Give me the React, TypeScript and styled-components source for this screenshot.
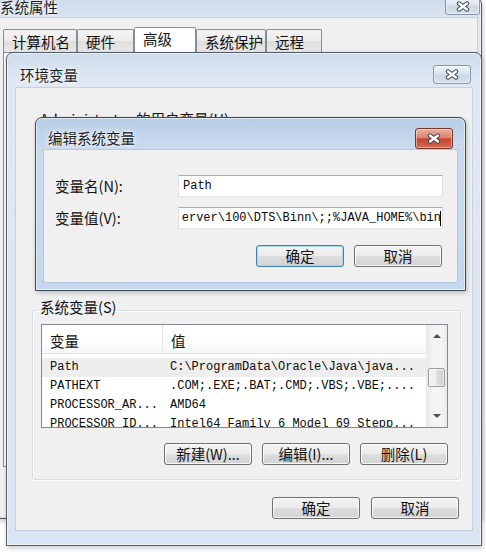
import React from "react"
import styled, { createGlobalStyle } from "styled-components"

const uiFont = `"Noto Sans CJK SC", "Noto Sans", sans-serif`
const monoFont = `"Liberation Mono", "DejaVu Sans Mono", monospace`

const GlobalStyle = createGlobalStyle`
  * { box-sizing: border-box; }
  html, body { margin: 0; padding: 0; background: #ffffff; }
  body { font-family: ${uiFont}; color: #111111; }
`

interface VarRow {
  name: string
  value: string
  selected?: boolean
}

const systemVars: VarRow[] = [
  { name: "Path", value: "C:\\ProgramData\\Oracle\\Java\\java...", selected: true },
  { name: "PATHEXT", value: ".COM;.EXE;.BAT;.CMD;.VBS;.VBE;...." },
  { name: "PROCESSOR_AR...", value: "AMD64" },
  { name: "PROCESSOR_ID...", value: "Intel64 Family 6 Model 69 Stepp..." },
]

const tabs = [
  { label: "计算机名", width: 74 },
  { label: "硬件", width: 57 },
  { label: "高级", width: 62, selected: true },
  { label: "系统保护", width: 70 },
  { label: "远程", width: 56 },
]

// the field is scrolled to its end, so only the tail is in view
const pathTail = "erver\\100\\DTS\\Binn\\;;%JAVA_HOME%\\bin"

const CloseGlyph = () => (
  <svg width="14" height="11" viewBox="0 0 14 11">
    <path
      d="M3 2.5 L11 8.5 M11 2.5 L3 8.5"
      stroke="#3d4450"
      strokeWidth="4.4"
      strokeLinecap="round"
      fill="none"
    />
    <path
      d="M3 2.5 L11 8.5 M11 2.5 L3 8.5"
      stroke="#ffffff"
      strokeWidth="2.4"
      strokeLinecap="round"
      fill="none"
    />
  </svg>
)

const VarList = ({ rows }: { rows: VarRow[] }) => (
  <ListBox>
    <ListTable>
      <ListHeader>
        <HeaderCell $divider>变量</HeaderCell>
        <HeaderCell>值</HeaderCell>
      </ListHeader>
      <ListBody>
        {rows.map((row) => (
          <ListRow key={row.name} $selected={row.selected}>
            <NameCell>{row.name}</NameCell>
            <ValueCell>{row.value}</ValueCell>
          </ListRow>
        ))}
      </ListBody>
    </ListTable>
    <ScrollBar>
      <ScrollArrow />
      <ScrollThumb />
      <ScrollTrack />
      <ScrollArrow $down />
    </ScrollBar>
  </ListBox>
)

export default function App() {
  return (
    <>
      <GlobalStyle />
      <Desktop>
        {/* 系统属性 (behind) */}
        <Window $x={-5} $y={-3} $w={487} $h={522}>
          <TitleBar $height={20} $padTop={0} $padLeft={4} $align="flex-start">
            <TitleText $top={0}>系统属性</TitleText>
            <CloseButton $w={35} $h={18} $mt={-1} $mr={1}>
              <CloseGlyph />
            </CloseButton>
          </TitleBar>
          <Client $side={4} $bottom={1}>
            <OuterBody>
              <TabStrip>
                {tabs.map((tab) => (
                  <Tab key={tab.label} $width={tab.width} $selected={tab.selected}>
                    {tab.label}
                  </Tab>
                ))}
              </TabStrip>
              <TabPanel />
            </OuterBody>
          </Client>
        </Window>

        {/* 环境变量 */}
        <Window $x={6} $y={52} $w={476} $h={494}>
          <TitleBar $height={35} $padTop={8} $padLeft={13}>
            <TitleText>环境变量</TitleText>
            <CloseButton $w={38} $h={19} $mr={10}>
              <CloseGlyph />
            </CloseButton>
          </TitleBar>
          <Client $side={9} $bottom={15}>
            <EnvBody>
              {/* user variables: covered by the edit dialog */}
              <GroupBox $ghost>
                <GroupLegend>Administrator 的用户变量(U)</GroupLegend>
                <CoveredArea />
              </GroupBox>
              <GroupBox $mt={7}>
                <GroupLegend>系统变量(S)</GroupLegend>
                <VarList rows={systemVars} />
                <ButtonRow $mt={15} $gap={10}>
                  <Button>新建(W)...</Button>
                  <Button>编辑(I)...</Button>
                  <Button>删除(L)</Button>
                </ButtonRow>
              </GroupBox>
              <ButtonRow $mt={17} $gap={11} $pr={2}>
                <Button>确定</Button>
                <Button>取消</Button>
              </ButtonRow>
            </EnvBody>
          </Client>
        </Window>

        {/* 编辑系统变量 (active) */}
        <Window $x={35} $y={117} $w={431} $h={174} $active>
          <TitleBar $height={32} $padTop={8} $padLeft={12}>
            <TitleText>编辑系统变量</TitleText>
            <CloseButton $w={38} $h={21} $mr={12} $danger>
              <CloseGlyph />
            </CloseButton>
          </TitleBar>
          <Client $side={8} $bottom={8}>
            <EditBody>
              <FieldLabel>变量名(N):</FieldLabel>
              <TextField>
                <span>Path</span>
              </TextField>
              <FieldLabel>变量值(V):</FieldLabel>
              <TextField $scrolled>
                <span>{pathTail}</span>
                <Caret />
              </TextField>
              <DialogButtons $mt={6} $gap={10} $pr={1}>
                <Button $default>确定</Button>
                <Button>取消</Button>
              </DialogButtons>
            </EditBody>
          </Client>
        </Window>
      </Desktop>
    </>
  )
}

const Desktop = styled.div`
  position: relative;
  width: 486px;
  height: 552px;
  overflow: hidden;
  background: #ffffff;
`

const Window = styled.div<{
  $x: number
  $y: number
  $w: number
  $h: number
  $active?: boolean
}>`
  position: absolute;
  left: ${(p) => p.$x}px;
  top: ${(p) => p.$y}px;
  width: ${(p) => p.$w}px;
  height: ${(p) => p.$h}px;
  display: flex;
  flex-direction: column;
  border: 1px solid ${(p) => (p.$active ? "#3e4957" : "#555c66")};
  border-radius: 7px 7px 0 0;
  background: ${(p) =>
    p.$active
      ? "linear-gradient(180deg, #b8cde7 0px, #c9daee 28px, #c6d8ed 100%)"
      : "linear-gradient(180deg, #cfdcec 0px, #dfe8f3 30px, #d9e5f2 100%)"};
  box-shadow: inset 0 0 0 1px rgba(255, 255, 255, 0.55),
    1px 2px 5px rgba(0, 0, 0, 0.22);
`

const TitleBar = styled.div<{
  $height: number
  $padTop: number
  $padLeft: number
  $align?: string
}>`
  flex: none;
  display: flex;
  align-items: ${(p) => p.$align || "center"};
  height: ${(p) => p.$height}px;
  padding-top: ${(p) => p.$padTop}px;
  padding-left: ${(p) => p.$padLeft}px;
`

const TitleText = styled.div<{ $top?: number }>`
  flex: 1;
  margin-top: ${(p) => p.$top || 0}px;
  font-size: 14.5px;
  line-height: 18px;
  color: #1c1c1c;
  white-space: nowrap;
  text-shadow: 0 0 6px #ffffff, 0 0 3px #ffffff;
`

const CloseButton = styled.div<{
  $w: number
  $h: number
  $mt?: number
  $mr: number
  $danger?: boolean
}>`
  flex: none;
  display: flex;
  align-items: center;
  justify-content: center;
  width: ${(p) => p.$w}px;
  height: ${(p) => p.$h}px;
  margin-top: ${(p) => p.$mt || 0}px;
  margin-right: ${(p) => p.$mr}px;
  border: 1px solid ${(p) => (p.$danger ? "#7a3328" : "#8796aa")};
  border-radius: 3px;
  background: ${(p) =>
    p.$danger
      ? "linear-gradient(180deg, #eab0a2 0%, #dc8470 45%, #c7442c 52%, #d36a54 100%)"
      : "linear-gradient(180deg, #eef3f9 0%, #dbe4ef 45%, #cbd7e6 52%, #d8e2ee 100%)"};
  box-shadow: inset 0 0 0 1px rgba(255, 255, 255, 0.45);
`

const Client = styled.div<{ $side: number; $bottom: number }>`
  flex: 1;
  display: flex;
  flex-direction: column;
  margin: 0 ${(p) => p.$side}px ${(p) => p.$bottom}px;
  background: #f0f0f0;
  box-shadow: 0 0 0 1px rgba(150, 170, 195, 0.35);
`

/* 系统属性 */

const OuterBody = styled.div`
  flex: 1;
  display: flex;
  flex-direction: column;
  padding: 9px 0 50px 3px;
`

const TabStrip = styled.div`
  flex: none;
  display: flex;
  align-items: flex-end;
  height: 25px;
`

const Tab = styled.div<{ $width: number; $selected?: boolean }>`
  flex: none;
  width: ${(p) => p.$width}px;
  height: ${(p) => (p.$selected ? 25 : 23)}px;
  padding: ${(p) => (p.$selected ? 1 : 2)}px 0 0 8px;
  border: 1px solid #898c95;
  border-bottom: none;
  border-radius: 2px 2px 0 0;
  background: ${(p) =>
    p.$selected
      ? "#ffffff"
      : "linear-gradient(180deg, #f4f4f4, #ececec 50%, #dfdfdf 52%, #e8e8e8)"};
  font-size: 14.5px;
  line-height: 20px;
  color: #111111;
  white-space: nowrap;
`

const TabPanel = styled.div`
  flex: 1;
  border: 1px solid #898c95;
  background: #fafafa;
`

/* 环境变量 */

const EnvBody = styled.div`
  flex: 1;
  display: flex;
  flex-direction: column;
  padding: 23px 11px 11px 16px;
`

const GroupBox = styled.fieldset<{ $ghost?: boolean; $mt?: number }>`
  margin: ${(p) => p.$mt || 0}px 0 0;
  min-width: 0;
  padding: 3px 12px 14px 8px;
  border: 1px solid ${(p) => (p.$ghost ? "transparent" : "#d5dfe5")};
  border-radius: 3px;
  box-shadow: ${(p) =>
    p.$ghost ? "none" : "inset 1px 1px 0 #ffffff, 1px 1px 0 #ffffff"};
`

const GroupLegend = styled.legend`
  margin-left: -2px;
  padding: 0 1px 6px;
  font-size: 14.5px;
  line-height: 16px;
  color: #111111;
  white-space: nowrap;
`

const CoveredArea = styled.div`
  height: 141px;
`

const ListBox = styled.div`
  display: flex;
  height: 104px;
  border: 1px solid #828790;
  background: #ffffff;
`

const ListTable = styled.div`
  flex: 1;
  min-width: 0;
  display: flex;
  flex-direction: column;
  overflow: hidden;
`

const ListHeader = styled.div`
  flex: none;
  display: grid;
  grid-template-columns: 121px 1fr;
  height: 29px;
  border-bottom: 1px solid #e3e6ea;
  background: linear-gradient(180deg, #ffffff 0%, #ffffff 55%, #f4f6f8 100%);
`

const HeaderCell = styled.div<{ $divider?: boolean }>`
  padding: 5px 0 0 8px;
  font-size: 14.5px;
  line-height: 22px;
  color: #111111;
  border-right: 1px solid ${(p) => (p.$divider ? "#e3e5e9" : "transparent")};
`

const ListBody = styled.div`
  flex: 1;
  padding-top: 4px;
  overflow: hidden;
`

const ListRow = styled.div<{ $selected?: boolean }>`
  display: grid;
  grid-template-columns: 121px 1fr;
  height: 19px;
  background: ${(p) => (p.$selected ? "#eeeeee" : "transparent")};
  font-family: ${monoFont};
  font-size: 12px;
  line-height: 19px;
  color: #0a0a0a;
  white-space: nowrap;
`

const NameCell = styled.div`
  padding-left: 8px;
  overflow: hidden;
`

const ValueCell = styled.div`
  padding-left: 7px;
  overflow: hidden;
`

const ScrollBar = styled.div`
  flex: none;
  width: 21px;
  display: flex;
  flex-direction: column;
  align-items: center;
  background: linear-gradient(90deg, #e8e8e8, #f4f4f4 35%, #f4f4f4 70%, #ebebeb);
`

const ScrollArrow = styled.div<{ $down?: boolean }>`
  flex: none;
  width: 100%;
  height: 22px;
  display: flex;
  align-items: center;
  justify-content: center;

  &::after {
    content: "";
    border-left: 4px solid transparent;
    border-right: 4px solid transparent;
    ${(p) =>
      p.$down ? "border-top: 4px solid #4b4f57;" : "border-bottom: 4px solid #4b4f57;"}
  }
`

const ScrollThumb = styled.div`
  flex: none;
  width: 17px;
  height: 19px;
  margin-top: 21px;
  border: 1px solid #9a9a9a;
  border-radius: 2px;
  background: linear-gradient(90deg, #f4f4f4, #ececec 45%, #dcdcdc 55%, #d2d2d2);
  box-shadow: inset 0 0 0 1px rgba(255, 255, 255, 0.6);
`

const ScrollTrack = styled.div`
  flex: 1;
`

const ButtonRow = styled.div<{ $mt: number; $gap: number; $pr?: number }>`
  display: flex;
  justify-content: flex-end;
  gap: ${(p) => p.$gap}px;
  margin-top: ${(p) => p.$mt}px;
  padding-right: ${(p) => p.$pr || 0}px;
`

const Button = styled.button<{ $default?: boolean }>`
  flex: none;
  width: 88px;
  height: 22px;
  padding: 0;
  border: 1px solid ${(p) => (p.$default ? "#3c7fb1" : "#707070")};
  border-radius: 3px;
  background: linear-gradient(180deg, #f3f3f3 0%, #ececec 48%, #dedede 52%, #d3d3d3 100%);
  box-shadow: inset 0 0 0 1px
    ${(p) => (p.$default ? "#a9dcf7" : "rgba(255, 255, 255, 0.8)")};
  font-family: ${uiFont};
  font-size: 14.5px;
  line-height: 20px;
  color: #111111;
  white-space: nowrap;
`

/* 编辑系统变量 */

const EditBody = styled.div`
  display: grid;
  grid-template-columns: 123px 1fr;
  align-items: center;
  row-gap: 10px;
  padding: 25px 14px 0 11px;
`

const FieldLabel = styled.div`
  font-size: 14.5px;
  line-height: 20px;
  color: #111111;
  white-space: nowrap;
`

const TextField = styled.div<{ $scrolled?: boolean }>`
  display: flex;
  align-items: center;
  justify-content: ${(p) => (p.$scrolled ? "flex-end" : "flex-start")};
  height: 22px;
  padding: 0 1px 0 4px;
  border: 1px solid;
  border-color: #abadb3 #dbdfe6 #e3e9ef #e2e3ea;
  background: #ffffff;
  overflow: hidden;
  font-family: ${monoFont};
  font-size: 12px;
  color: #0a0a0a;
  white-space: nowrap;

  & > span {
    flex: none;
  }
`

const Caret = styled.i`
  flex: none;
  width: 1px;
  height: 15px;
  margin-left: -1px;
  background: #000000;
`

const DialogButtons = styled(ButtonRow)`
  grid-column: 1 / -1;
`
